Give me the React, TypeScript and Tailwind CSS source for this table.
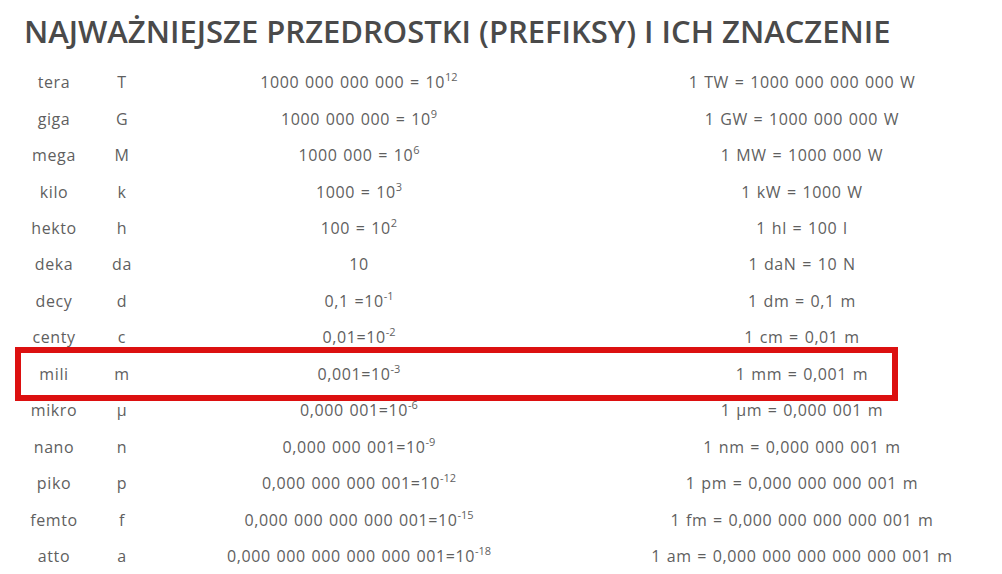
const ROWS: { name: string; sym: string; base: string; exp?: string; example: string }[] = [
  { name: "tera", sym: "T", base: "1000 000 000 000 = 10", exp: "12", example: "1 TW = 1000 000 000 000 W" },
  { name: "giga", sym: "G", base: "1000 000 000 = 10", exp: "9", example: "1 GW = 1000 000 000 W" },
  { name: "mega", sym: "M", base: "1000 000 = 10", exp: "6", example: "1 MW = 1000 000 W" },
  { name: "kilo", sym: "k", base: "1000 = 10", exp: "3", example: "1 kW = 1000 W" },
  { name: "hekto", sym: "h", base: "100 = 10", exp: "2", example: "1 hl = 100 l" },
  { name: "deka", sym: "da", base: "10", example: "1 daN = 10 N" },
  { name: "decy", sym: "d", base: "0,1 =10", exp: "-1", example: "1 dm = 0,1 m" },
  { name: "centy", sym: "c", base: "0,01=10", exp: "-2", example: "1 cm = 0,01 m" },
  { name: "mili", sym: "m", base: "0,001=10", exp: "-3", example: "1 mm = 0,001 m" },
  { name: "mikro", sym: "μ", base: "0,000 001=10", exp: "-6", example: "1 μm = 0,000 001 m" },
  { name: "nano", sym: "n", base: "0,000 000 001=10", exp: "-9", example: "1 nm = 0,000 000 001 m" },
  { name: "piko", sym: "p", base: "0,000 000 000 001=10", exp: "-12", example: "1 pm = 0,000 000 000 001 m" },
  { name: "femto", sym: "f", base: "0,000 000 000 000 001=10", exp: "-15", example: "1 fm = 0,000 000 000 000 001 m" },
  { name: "atto", sym: "a", base: "0,000 000 000 000 000 001=10", exp: "-18", example: "1 am = 0,000 000 000 000 000 001 m" },
];

export default function App() {
  return (
    <div className="h-[574px] w-full overflow-hidden bg-white font-['Open_Sans',sans-serif] text-[#5f5f5f]">
      <h1 className="pl-[24px] pt-[9px] text-[31px] leading-[44px] font-semibold tracking-normal text-[#4a4a4a] whitespace-nowrap">
        NAJWAŻNIEJSZE PRZEDROSTKI (PREFIKSY) I ICH ZNACZENIE
      </h1>
      <div className="mt-[11px] pl-[16px] w-[1100px]">
        {ROWS.map((r) => (
          <div key={r.name} className="relative flex h-[36.46px] items-center text-[16px] tracking-[0.6px] [word-spacing:1px] whitespace-nowrap">
            <div className="w-[76px] text-center">{r.name}</div>
            <div className="w-[60px] text-center">{r.sym}</div>
            <div className="w-[414px] text-center">
              {r.base}
              {r.exp && <sup className="-top-[7px] text-[11px] tracking-normal">{r.exp}</sup>}
            </div>
            <div className="w-[472px] text-center">{r.example}</div>
            {r.name === "mili" && (
              <div className="pointer-events-none absolute -left-[1px] -top-[9px] h-[54px] w-[883px] border-[6px] border-[#dc1010]" />
            )}
          </div>
        ))}
      </div>
    </div>
  );
}
